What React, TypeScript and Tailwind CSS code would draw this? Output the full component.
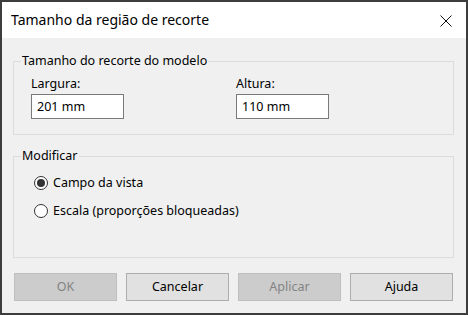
import React from "react";

function Radio({ checked, label }: { checked?: boolean; label: string }) {
  return (
    <div className="flex items-center h-[20px]">
      <div className="w-[14px] h-[14px] rounded-full border border-[#333333] bg-white flex items-center justify-center">
        {checked && <div className="w-[8px] h-[8px] rounded-full bg-[#333333]" />}
      </div>
      <span className="ml-[5px]">{label}</span>
    </div>
  );
}

function Btn({ label, disabled }: { label: string; disabled?: boolean }) {
  return (
    <div
      className={
        disabled
          ? "w-[103px] h-[28px] flex items-center justify-center bg-[#cccccc] border border-[#bfbfbf] text-[#838383]"
          : "w-[103px] h-[28px] flex items-center justify-center bg-[#e1e1e1] border border-[#adadad] text-black"
      }
    >
      {label}
    </div>
  );
}

export default function App() {
  return (
    <div
      className="w-[468px] h-[315px] border-2 border-[#3d3d3d] bg-[#f0f0f0] flex flex-col text-[12.5px] leading-[18px] text-black"
      style={{ fontFamily: '"Noto Sans", "Liberation Sans", sans-serif' }}
    >
      <div className="h-[36px] bg-white flex items-center justify-between pl-[9px] pr-[14px]">
        <span className="text-[14px]">Tamanho da região de recorte</span>
        <svg width="12" height="12" viewBox="0 0 12 12" className="mt-[1px]">
          <path d="M0.5 0.5 L11.5 11.5 M11.5 0.5 L0.5 11.5" stroke="#111" strokeWidth="1" fill="none" />
        </svg>
      </div>
      <div className="flex flex-col pl-[11px] pr-[12px] pt-[14px]">
        <fieldset className="border border-[#dcdcdc] pl-[7px] pb-[15px] pt-[5px]">
          <legend className="px-[1px]">Tamanho do recorte do modelo</legend>
          <div className="flex gap-[112px] pl-[10px]">
            <div className="flex flex-col">
              <span className="mb-[1px]">Largura:</span>
              <div className="w-[93px] h-[25px] bg-white border border-[#7a7a7a] flex items-center pl-[5px]">201 mm</div>
            </div>
            <div className="flex flex-col">
              <span className="mb-[1px]">Altura:</span>
              <div className="w-[93px] h-[25px] bg-white border border-[#7a7a7a] flex items-center pl-[5px]">110 mm</div>
            </div>
          </div>
        </fieldset>
        <fieldset className="mt-[12px] border border-[#dcdcdc] pl-[7px] pt-[8px] pb-[36px]">
          <legend className="px-[1px]">Modificar</legend>
          <div className="flex flex-col gap-[8px] pl-[13px]">
            <Radio checked label="Campo da vista" />
            <Radio label="Escala (proporções bloqueadas)" />
          </div>
        </fieldset>
        <div className="flex gap-[9px] mt-[15px] pl-[1px]">
          <Btn label="OK" disabled />
          <Btn label="Cancelar" />
          <Btn label="Aplicar" disabled />
          <Btn label="Ajuda" />
        </div>
      </div>
    </div>
  );
}
